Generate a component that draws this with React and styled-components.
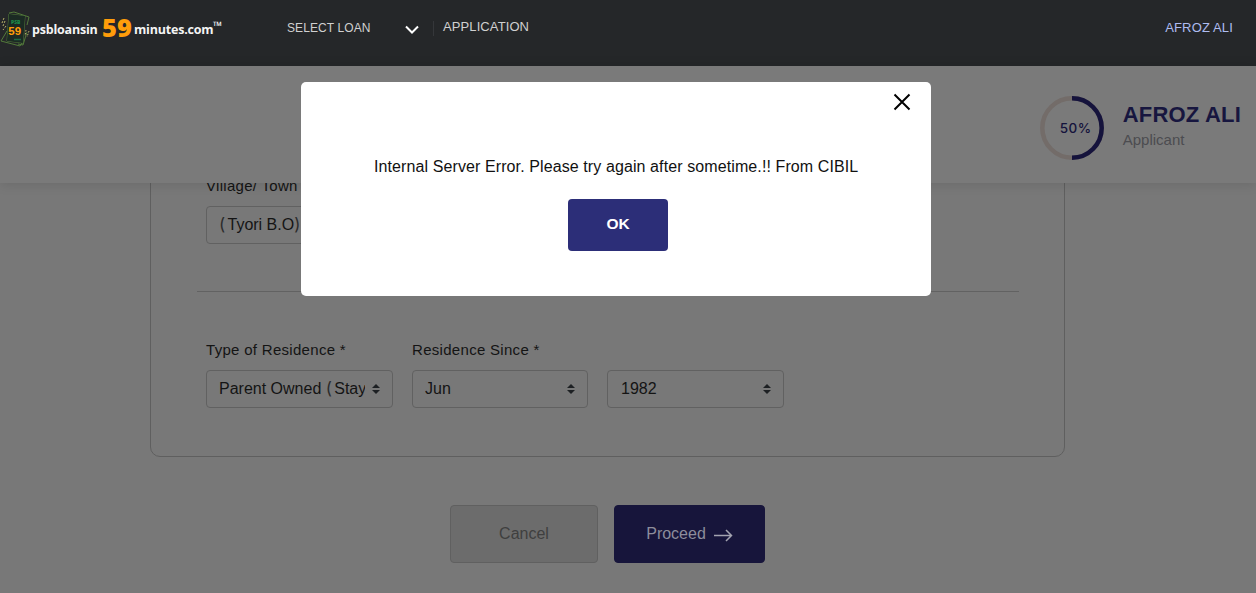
import React from "react";
import styled, { createGlobalStyle } from "styled-components";

const Global = createGlobalStyle`
  * { box-sizing: border-box; }
  body {
    margin: 0;
    background: #787878;
    font-family: "Liberation Sans", Arial, sans-serif;
    overflow: hidden;
  }
  button, p, h2 { margin: 0; font-family: inherit; }
`;

const Page = styled.div`
  position: relative;
  display: flex;
  flex-direction: column;
  width: 1256px;
  height: 593px;
  overflow: hidden;
  background: #787878;
`;

const Header = styled.header`
  display: flex;
  align-items: flex-start;
  flex: none;
  height: 66px;
  padding-right: 23px;
  background: #252729;
`;

const Brand = styled.a`
  display: flex;
  align-items: flex-start;
  width: 287px;
  padding-top: 10px;
  color: #f4f4f4;
  font-family: "Open Sans", sans-serif;
  font-weight: 700;
  white-space: nowrap;
`;

const BrandMark = styled.svg`
  flex: none;
  width: 30px;
  height: 38px;
  margin-right: 2px;
`;

const BrandWord = styled.span`
  width: ${(p) => p.$width}px;
  padding-top: 10px;
  font-size: 12.5px;
  line-height: 20px;
  letter-spacing: ${(p) => p.$spacing}px;
`;

const BrandNumber = styled.span`
  width: 32px;
  font-size: 25.5px;
  font-weight: 800;
  line-height: 35px;
  color: #ff9d0a;
`;

const TradeMark = styled.sup`
  padding-top: 10px;
  font-size: 12px;
  line-height: 12px;
  vertical-align: baseline;
`;

const LoanMenu = styled.div`
  display: flex;
  justify-content: space-between;
  width: 147px;
  height: 15px;
  margin-top: 21px;
  padding-right: 14px;
  border-right: 1px solid #35373a;
  color: #d0d0d0;
  font-size: 12px;
  line-height: 15px;
  letter-spacing: 0.1px;
`;

const Chevron = styled.svg`
  width: 14px;
  height: 9px;
  margin-top: 4px;
`;

const NavItem = styled.span`
  margin: 19px 0 0 9px;
  color: #d0d0d0;
  font-size: 13px;
  line-height: 16px;
  letter-spacing: 0.1px;
`;

const UserLink = styled.span`
  margin: 20px 0 0 auto;
  color: #aebcf0;
  font-size: 13px;
  line-height: 16px;
  letter-spacing: 0.15px;
`;

const ProfileBar = styled.section`
  display: flex;
  flex: none;
  justify-content: flex-end;
  z-index: 1;
  height: 117px;
  padding: 30px 15px 0 0;
  background: #7a7a7a;
  box-shadow: 0 1px 12px rgba(0, 0, 0, 0.12);
`;

const Progress = styled.div`
  display: grid;
  width: 64px;
  height: 64px;
  margin-right: 19px;
  > * { grid-area: 1 / 1; }
`;

const ProgressValue = styled.span`
  padding-left: 8px;
  color: #15133c;
  font-family: Inter, sans-serif;
  font-size: 13.5px;
  font-weight: 500;
  letter-spacing: 0.4px;
  line-height: 64px;
  text-align: center;
`;

const Person = styled.div`
  padding-top: 6px;
`;

const PersonName = styled.h2`
  color: #17163f;
  font-size: 22px;
  font-weight: 700;
  line-height: 26px;
  letter-spacing: 0.2px;
`;

const PersonRole = styled.p`
  padding-top: 3px;
  color: #4c4c50;
  font-size: 15px;
  line-height: 18px;
`;

const Content = styled.main`
  flex: 1;
  min-height: 0;
  overflow: hidden;
`;

const Card = styled.section`
  width: 915px;
  height: 294px;
  margin: -20px 0 0 150px;
  padding: 13px 45px 0;
  border: 1px solid #5f5f5f;
  border-radius: 10px;
`;

const FieldRow = styled.div`
  display: flex;
  gap: 19px;
  padding-left: 10px;
`;

const Field = styled.div`
  width: ${(p) => p.$width}px;
`;

const Label = styled.label`
  display: block;
  height: 18px;
  color: #141414;
  font-size: 15px;
  line-height: 18px;
  letter-spacing: 0.3px;
  white-space: nowrap;
`;

const Box = styled.div`
  display: flex;
  align-items: center;
  justify-content: space-between;
  height: 38px;
  margin-top: 11px;
  padding: 0 12px 1px;
  border: 1px solid #616161;
  border-radius: 4px;
  color: #141414;
  font-size: 16px;
  line-height: 22px;
`;

const Value = styled.span`
  overflow: hidden;
  height: 22px;
  max-width: 146px;
  padding-left: ${(p) => p.$inset || 0}px;
  white-space: nowrap;
`;

const Paren = styled.span`
  display: inline-block;
  width: 8.5px;
  color: #2c2c2c;
  font-family: Inter, sans-serif;
  font-weight: 400;
  font-size: 17px;
  line-height: 20px;
`;

const SortIcon = styled.svg`
  flex: none;
  width: 8px;
  height: 10px;
  margin-top: 1px;
`;

const Divider = styled.hr`
  width: 822px;
  height: 1px;
  margin: 47px 0 49px 1px;
  border: 0;
  background: #626262;
`;

const Actions = styled.div`
  display: flex;
  gap: 16px;
  padding: 48px 0 0 450px;
`;

const Action = styled.button`
  display: flex;
  align-items: center;
  justify-content: center;
  gap: 8px;
  width: ${(p) => (p.$primary ? 151 : 148)}px;
  height: 58px;
  padding: 0 0 1px;
  border: 1px solid ${(p) => (p.$primary ? "#17153b" : "#606060")};
  border-radius: 4px;
  background: ${(p) => (p.$primary ? "#17153b" : "#6c6c6c")};
  color: ${(p) => (p.$primary ? "#8d8d9c" : "#3f3f3f")};
  font-size: 16px;
`;

const Arrow = styled.svg`
  width: 19px;
  height: 13px;
  margin-top: 4px;
`;

const Overlay = styled.div`
  position: absolute;
  inset: 0;
  z-index: 2;
  display: flex;
  align-items: flex-start;
  padding: 82px 0 0 301px;
`;

const Dialog = styled.div`
  display: flex;
  flex-direction: column;
  width: 630px;
  height: 214px;
  border-radius: 5px;
  background: #fff;
`;

const Close = styled.button`
  display: flex;
  align-self: flex-end;
  margin: 11px 20px 0 0;
  padding: 0;
  border: 0;
  background: none;
`;

const Message = styled.p`
  padding: 46px 0 0 73px;
  color: #111;
  font-size: 16px;
  line-height: 20px;
  letter-spacing: 0.1px;
  white-space: nowrap;
`;

const Confirm = styled.button`
  width: 100px;
  height: 52px;
  margin: 22px 0 0 267px;
  padding: 0 0 3px;
  border: 0;
  border-radius: 4px;
  background: #2c2e78;
  color: #fff;
  font-size: 15.5px;
  font-weight: 700;
`;

const Sort = () => (
  <SortIcon viewBox="0 0 8 10">
    <path d="M0 4 4 0l4 4ZM0 6h8l-4 4Z" fill="#1d2023" />
  </SortIcon>
);

const Select = ({ children, inset }) => (
  <Box>
    <Value $inset={inset}>{children}</Value>
    <Sort />
  </Box>
);

const Logo = () => (
  <BrandMark viewBox="0 0 30 38">
    <g fill="none" stroke="#527a3a" strokeWidth="1">
      <path d="M9 3 14 2 29 7 27 15M27 22 23 35 18 34M9 4 7 31 23 33 25 6ZM7 21 1 31 20 36 22 33" />
      <path d="m5 11-2 5M4 8 2 13M6 16l-3 4" stroke="#b9b46a" strokeDasharray="2 1.5" />
      <path d="m26 20-1 6M29 21l-2 6" stroke="#b9b46a" strokeDasharray="1.5 1.5" />
    </g>
    <path d="m9 4 16 2-2 27-16-2Z" fill="#1b2a23" />
    <text x="11" y="13.5" fill="#1d8a4a" fontSize="5" fontFamily="Open Sans" fontWeight="800">PSB</text>
    <text x="8.3" y="25" fill="#ff9d0a" fontSize="11.5" fontFamily="Liberation Sans" fontWeight="700">59</text>
    <path d="M14 29.5h7" stroke="#1d6a42" strokeWidth="1.5" />
  </BrandMark>
);

export default function App() {
  return (
    <Page>
      <Global />
      <Header>
        <Brand>
          <Logo />
          <BrandWord $width={70} $spacing={-0.2}>psbloansin</BrandWord>
          <BrandNumber>59</BrandNumber>
          <BrandWord $width={79} $spacing={-0.2}>minutes.com</BrandWord>
          <TradeMark>™</TradeMark>
        </Brand>
        <LoanMenu>
          SELECT LOAN
          <Chevron viewBox="0 0 14 9">
            <path d="m1 1.5 6 6 6-6" fill="none" stroke="#fff" strokeWidth="2" />
          </Chevron>
        </LoanMenu>
        <NavItem>APPLICATION</NavItem>
        <UserLink>AFROZ ALI</UserLink>
      </Header>

      <ProfileBar>
        <Progress>
          <svg width="64" height="64" viewBox="0 0 64 64" fill="none" strokeWidth="4.5">
            <circle cx="32" cy="32" r="29.7" stroke="#736c69" />
            <path d="M32 2.3a29.7 29.7 0 0 1 0 59.4" stroke="#15133c" />
          </svg>
          <ProgressValue>50%</ProgressValue>
        </Progress>
        <Person>
          <PersonName>AFROZ ALI</PersonName>
          <PersonRole>Applicant</PersonRole>
        </Person>
      </ProfileBar>

      <Content>
        <Card>
          <FieldRow>
            <Field $width={187}>
              <Label>Village/ Town</Label>
              <Box>
                <Value><Paren>(</Paren>Tyori B.O<Paren>)</Paren></Value>
              </Box>
            </Field>
          </FieldRow>
          <Divider />
          <FieldRow>
            <Field $width={187}>
              <Label>Type of Residence *</Label>
              <Select>Parent Owned <Paren>(</Paren>Stay</Select>
            </Field>
            <Field $width={176}>
              <Label>Residence Since *</Label>
              <Select>Jun</Select>
            </Field>
            <Field $width={177}>
              <Label />
              <Select inset={1}>1982</Select>
            </Field>
          </FieldRow>
        </Card>
        <Actions>
          <Action>Cancel</Action>
          <Action $primary>
            Proceed
            <Arrow viewBox="0 0 19 13">
              <path d="M0 6.5h17.5M12 1l5.5 5.5L12 12" fill="none" stroke="#a3a3b0" strokeWidth="1.5" />
            </Arrow>
          </Action>
        </Actions>
      </Content>

      <Overlay>
        <Dialog role="dialog">
          <Close aria-label="Close">
            <svg width="18" height="18" viewBox="0 0 18 18">
              <path d="m1.5 1.5 15 15m0-15-15 15" fill="none" stroke="#000" strokeWidth="2" />
            </svg>
          </Close>
          <Message>Internal Server Error. Please try again after sometime.!! From CIBIL</Message>
          <Confirm>OK</Confirm>
        </Dialog>
      </Overlay>
    </Page>
  );
}
